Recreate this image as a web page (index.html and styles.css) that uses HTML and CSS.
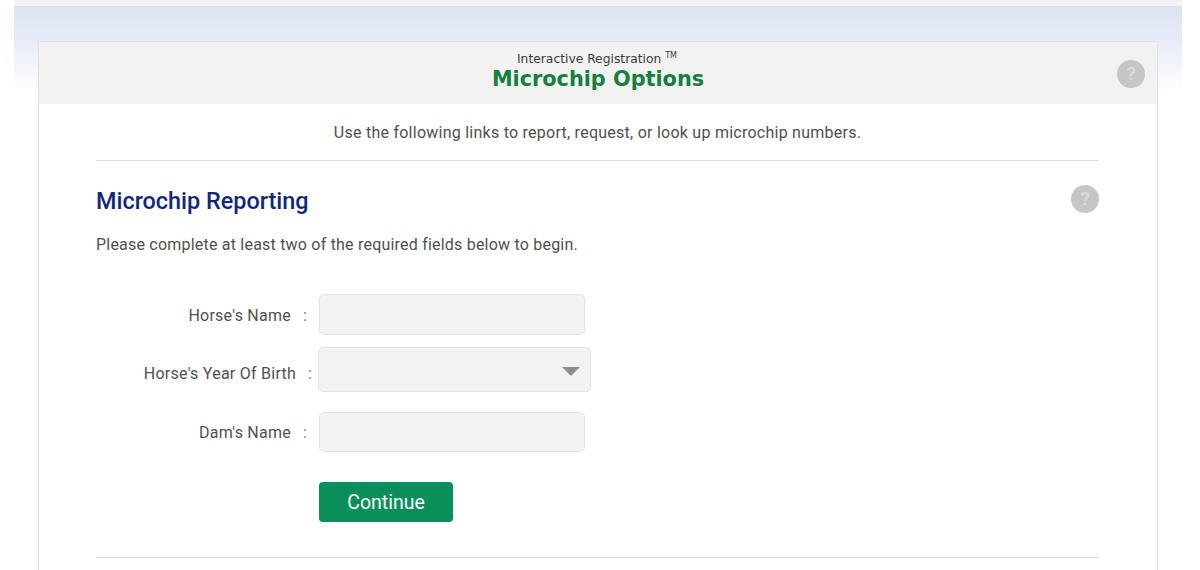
FILE: index.html
```html
<!DOCTYPE html>
<html lang="en">
<head>
  <meta charset="UTF-8" />
  <meta name="viewport" content="width=device-width, initial-scale=1.0"/>
  <title>Microchip Options</title>
  <link rel="stylesheet" href="styles.css">
</head>
<body>
  <div class="top-strip"></div>
  <div class="backdrop">
    <div class="panel">
      <div class="panel-header">
        <div class="eyebrow">Interactive Registration <sup>TM</sup></div>
        <h1>Microchip Options</h1>
        <span class="help help-header">?</span>
      </div>
      <div class="panel-body">
        <p class="intro">Use the following links to report, request, or look up microchip numbers.</p>
        <div class="section-head">
          <h2>Microchip Reporting</h2>
          <span class="help">?</span>
        </div>
        <p class="lead">Please complete at least two of the required fields below to begin.</p>
        <form class="report-form">
          <div class="field">
            <label for="horseName">Horse's Name</label>
            <span class="colon">:</span>
            <input type="text" id="horseName"/>
          </div>
          <div class="field field-year">
            <label for="yearOfBirth">Horse's Year Of Birth</label>
            <span class="colon">:</span>
            <div class="select-box" id="yearOfBirth"><span class="arrow"></span></div>
          </div>
          <div class="field field-dam">
            <label for="damName">Dam's Name</label>
            <span class="colon">:</span>
            <input type="text" id="damName"/>
          </div>
          <button type="button">Continue</button>
        </form>
        <hr class="rule"/>
      </div>
    </div>
  </div>
</body>
</html>
```

FILE: styles.css
```css
html, body {
  height: 570px;
  overflow: hidden;
}

body {
  margin: 0;
  font-family: Roboto, 'Liberation Sans', sans-serif;
  background: #fff;
  color: #505050;
}

.top-strip {
  height: 6px;
  margin: 0 18px 0 14px;
  background: #f4f2f4;
  border-bottom: 1px solid #dfdfe3;
}

.backdrop {
  margin: 0 18px 0 14px;
  padding: 34px 24px 0;
  background: linear-gradient(#dce4f0, #e5eaf6 30px, #fff 84px) no-repeat;
  background-size: 100% 84px;
}

.panel {
  background: #fff;
  border: 1px solid #e0e0e0;
  border-bottom: none;
  border-radius: 3px 3px 0 0;
  height: 529px;
  box-sizing: border-box;
}

.panel-header {
  position: relative;
  height: 62px;
  background: #f2f2f2;
  text-align: center;
}

.eyebrow {
  padding-top: 10px;
  padding-right: 2px;
  font-family: 'DejaVu Sans', sans-serif;
  font-size: 12.3px;
  line-height: 15px;
  color: #3c3c3c;
}

.eyebrow sup {
  font-size: 8px;
  line-height: 0;
}

h1 {
  margin: 0;
  font-family: 'DejaVu Sans', sans-serif;
  font-size: 20.8px;
  line-height: 24px;
  font-weight: 700;
  color: #14803c;
}

.help {
  width: 28px;
  height: 28px;
  border-radius: 50%;
  background: #c6c6c6;
  color: #dcdcdc;
  font-size: 19px;
  font-weight: 500;
  line-height: 28px;
  text-align: center;
}

.help-header {
  position: absolute;
  right: 12px;
  top: 18px;
}

.panel-body {
  padding: 0 58px 0 57px;
}

.intro {
  margin: 0;
  padding: 19px 0 17px;
  line-height: 20px;
  font-size: 16px;
  letter-spacing: 0.25px;
  text-align: center;
  border-bottom: 1px solid #dddddd;
}

.section-head {
  display: flex;
  justify-content: space-between;
  align-items: center;
  margin-top: 24px;
  height: 28px;
}

h2 {
  margin: 0;
  padding-top: 4px;
  font-size: 23.4px;
  font-weight: 500;
  color: #12277c;
}

.lead {
  margin: 22px 0 0;
  font-size: 16px;
  line-height: 20px;
  letter-spacing: 0.21px;
}

.report-form {
  margin-top: 39px;
}

.field {
  display: flex;
  align-items: center;
  height: 41px;
  margin-bottom: 12px;
}

.field label {
  width: 195px;
  margin-top: 2px;
  text-align: right;
  font-size: 16px;
  letter-spacing: 0.25px;
}

.colon {
  width: 28px;
  margin-top: 2px;
  padding-left: 12px;
  box-sizing: border-box;
  font-size: 16px;
  color: #777;
}

.field input,
.select-box {
  box-sizing: border-box;
  height: 100%;
  background: #f2f2f2;
  border: 1px solid #e2e2e2;
  border-radius: 5px;
}

.field input {
  width: 266px;
  padding: 0;
}

.field-year {
  height: 45px;
  margin-bottom: 20px;
}

.field-year label {
  width: 200px;
  margin-top: 8px;
}

.field-year .colon {
  width: 22px;
  margin-top: 8px;
}

.field-dam label,
.field-dam .colon {
  margin-top: 0;
}

.select-box {
  position: relative;
  width: 273px;
}

.arrow {
  position: absolute;
  right: 10px;
  top: 19px;
  border-left: 9px solid transparent;
  border-right: 9px solid transparent;
  border-top: 9px solid #8e8e8e;
}

.field-dam {
  height: 40px;
  margin-bottom: 30px;
}

button {
  display: block;
  width: 134px;
  height: 40px;
  margin-left: 223px;
  background: #0a8f5b;
  color: #fff;
  border: none;
  border-radius: 4px;
  font-family: Roboto, sans-serif;
  font-size: 19.5px;
  font-weight: 400;
}

.rule {
  margin: 35px 0 0;
  border: none;
  border-top: 1px solid #dcdcdc;
}
```
